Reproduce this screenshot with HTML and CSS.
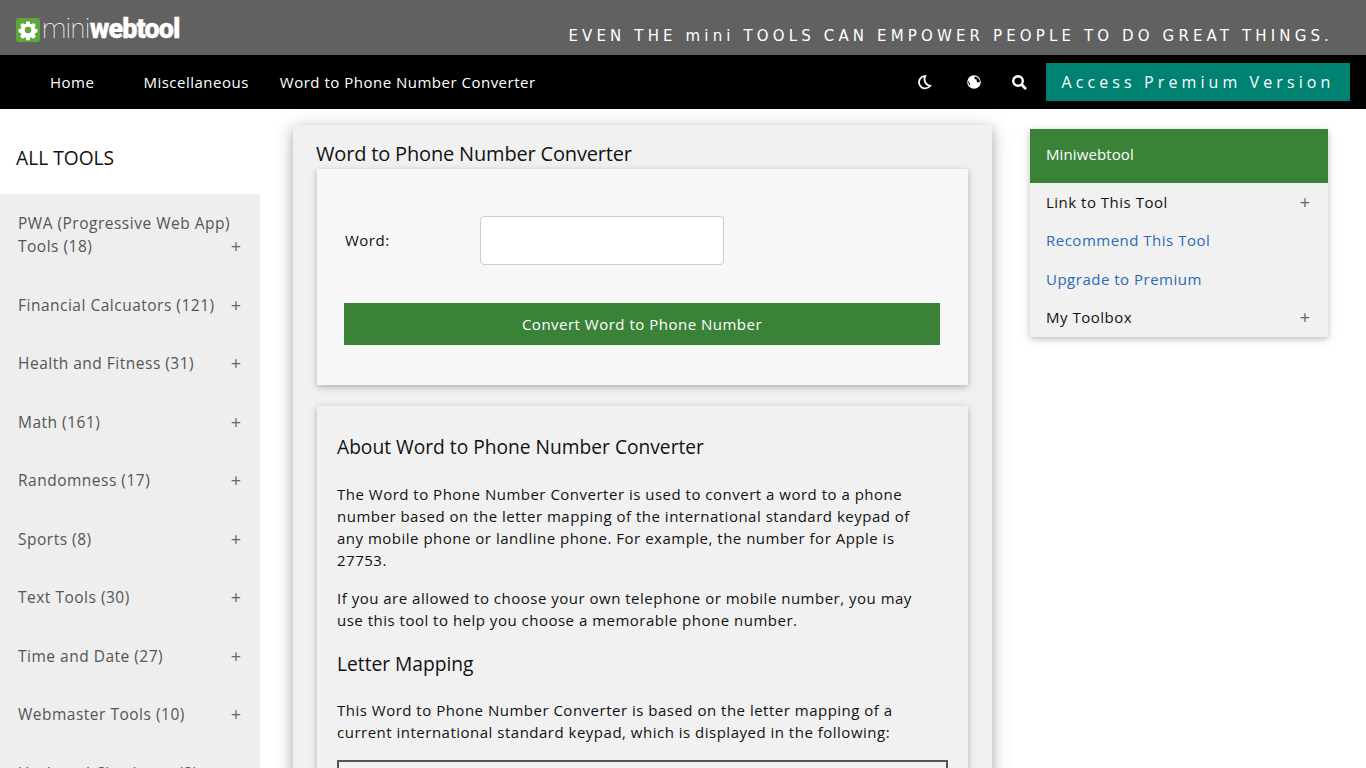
FILE: index.html
```html
<!DOCTYPE html>
<html lang="en">
<head>
<meta charset="utf-8">
<title>Word to Phone Number Converter</title>
<link rel="stylesheet" href="styles.css">
</head>
<body>
<header class="topbar">
  <a class="logo">
    <svg class="logo-icon" viewBox="0 0 24 24" width="24" height="24">
      <rect width="24" height="24" rx="3" fill="#5fa63a"/>
      <path fill="#fff" fill-rule="evenodd" d="M10.300 4h3.400l.4 2.200 1.500.6 1.900-1.300 2.400 2.400-1.300 1.900.6 1.500 2.200.4v3.400l-2.200.4-.6 1.500 1.300 1.900-2.400 2.400-1.900-1.300-1.500.6-.4 2.200h-3.400l-.4-2.200-1.500-.6-1.900 1.300-2.400-2.400 1.300-1.900-.6-1.500-2.200-.4v-3.400l2.200-.4.6-1.500-1.300-1.900 2.400-2.400 1.900 1.300 1.500-.6zM12 9.200a3.300 3.300 0 1 0 0 6.600 3.300 3.300 0 0 0 0-6.600z" transform="translate(0 -.5)"/>
    </svg>
    <span class="logo-thin">mini</span><span class="logo-bold">webtool</span>
  </a>
  <div class="slogan">EVEN THE mini TOOLS CAN EMPOWER PEOPLE TO DO GREAT THINGS.</div>
</header>
<nav class="navbar">
  <a class="nav-home">Home</a>
  <a class="nav-misc">Miscellaneous</a>
  <a class="nav-tool">Word to Phone Number Converter</a>
  <div class="nav-right">
    <svg class="nav-icon moon" viewBox="0 0 16 16" width="16" height="16"><path fill="none" stroke="#fff" stroke-width="1.700" d="M9.300 2a6.200 6.200 0 1 0 5 9.800A6.600 6.600 0 0 1 9.300 2z"/></svg>
    <svg class="nav-icon globe" viewBox="0 0 16 16" width="16" height="16"><path fill="#fff" fill-rule="evenodd" d="M8 1.200a6.800 6.800 0 1 1 0 13.600A6.800 6.800 0 0 1 8 1.200zM9.300 2.500c-.9.600-1.200 1.500-.6 2.300.6.700 1.600.5 1.900 1.300.2.800-.1 1.500.5 2 .7.400 1.800.2 2.800-.2-.3-2.500-2.100-4.600-4.600-5.400zM2.400 6.500c-.4 1.900.2 3.900 1.700 5.200.1-1.100-.1-2-.5-2.700-.4-.9-.6-1.800-1.200-2.500z"/></svg>
    <svg class="nav-icon search" viewBox="0 0 16 16" width="16" height="16"><circle cx="7" cy="7" r="4.800" fill="none" stroke="#fff" stroke-width="2.400"/><path stroke="#fff" stroke-width="2.800" stroke-linecap="round" d="M10.800 10.800l3.400 3.400"/></svg>
    <a class="premium">Access Premium Version</a>
  </div>
</nav>
<div class="layout">
  <aside class="sidebar">
    <h2 class="all-tools">ALL TOOLS</h2>
    <ul class="tool-list">
      <li class="tall"><span>PWA (Progressive Web App) Tools (18)</span><i>+</i></li>
      <li><span>Financial Calcuators (121)</span><i>+</i></li>
      <li><span>Health and Fitness (31)</span><i>+</i></li>
      <li><span>Math (161)</span><i>+</i></li>
      <li><span>Randomness (17)</span><i>+</i></li>
      <li><span>Sports (8)</span><i>+</i></li>
      <li><span>Text Tools (30)</span><i>+</i></li>
      <li><span>Time and Date (27)</span><i>+</i></li>
      <li><span>Webmaster Tools (10)</span><i>+</i></li>
      <li><span>Hash and Checksum (8)</span><i>+</i></li>
    </ul>
  </aside>
  <main class="main-card">
    <h1 class="page-title">Word to Phone Number Converter</h1>
    <form class="form-card">
      <div class="field">
        <label class="field-label">Word:</label>
        <input class="field-input" type="text">
      </div>
      <button class="submit" type="button">Convert Word to Phone Number</button>
    </form>
    <section class="about-card">
      <h2 class="about-title">About Word to Phone Number Converter</h2>
      <p>The Word to Phone Number Converter is used to convert a word to a phone number based on the letter mapping of the international standard keypad of any mobile phone or landline phone. For example, the number for Apple is 27753.</p>
      <p>If you are allowed to choose your own telephone or mobile number, you may use this tool to help you choose a memorable phone number.</p>
      <h3 class="about-sub">Letter Mapping</h3>
      <p>This Word to Phone Number Converter is based on the letter mapping of a current international standard keypad, which is displayed in the following:</p>
      <div class="keypad"></div>
    </section>
  </main>
  <aside class="right-panel">
    <div class="panel-head">Miniwebtool</div>
    <div class="panel-row"><span>Link to This Tool</span><i>+</i></div>
    <div class="panel-row link"><span>Recommend This Tool</span></div>
    <div class="panel-row link"><span>Upgrade to Premium</span></div>
    <div class="panel-row"><span>My Toolbox</span><i>+</i></div>
  </aside>
</div>
</body>
</html>
```
FILE: styles.css
```css
* { box-sizing: border-box; }
html, body { margin: 0; height: 768px; overflow: hidden; }
body { font-family: "Open Sans", "Noto Sans", sans-serif; font-size: 15px; letter-spacing: .5px; color: #111; background: #fff; }
.topbar { height: 55px; background: #616161; display: flex; justify-content: space-between; padding: 0 33px 0 16px; }
.logo { display: flex; align-items: center; color: #fff; padding-top: 4px; height: 55px; }
.logo-icon { margin-right: 2px; }
.logo-thin { font-family: Roboto, sans-serif; font-weight: 100; font-size: 27px; letter-spacing: -0.6px; margin-top: -1px; }
.logo-bold { font-family: Roboto, sans-serif; font-weight: 900; font-size: 27px; letter-spacing: -.9px; margin-top: -1px; -webkit-text-stroke: .3px #fff; }
.slogan { align-self: flex-end; padding-bottom: 10px; font-family: "DejaVu Sans", sans-serif; font-size: 15px; letter-spacing: 4.140px; color: #fff; }
.navbar { height: 54px; background: #000; color: #fff; display: flex; align-items: center; padding: 0 16px 0 50px; }
.nav-misc { margin-left: 49px; }
.nav-tool { margin-left: 31px; }
.nav-right { margin-left: auto; display: flex; align-items: center; }
.nav-icon { margin-right: 33px; }
.globe { margin-right: 29px; }
.search { margin-right: 19px; }
.moon { margin-left: -1px; margin-right: 34px; }
.premium { width: 304px; height: 38px; background: #008272; display: flex; align-items: center; justify-content: center; font-size: 16px; letter-spacing: 4.100px; }
.layout { display: flex; align-items: flex-start; }
.sidebar { width: 260px; flex: none; }
.all-tools { margin: 0; height: 85px; padding: 37px 0 0 16px; font-size: 19.200px; font-weight: 400; line-height: 24px; letter-spacing: 0; }
.tool-list { list-style: none; margin: 0; padding: 0 0 100px; background: #eee; color: #555; font-size: 15.500px; }
.tool-list li { display: flex; justify-content: space-between; align-items: flex-end; padding: 17.750px 19px 17.750px 18px; line-height: 23px; height: 58.500px; }
.tool-list li.tall { height: 81.750px; }
.tool-list li.tall span { max-width: 220px; }
.tool-list i, .panel-row i { font-style: normal; color: #666; font-size: 18px; letter-spacing: 0; }
.main-card { width: 699px; margin: 16px 0 0 33px; padding: 14px 24px 0; background: #f1f1f1; box-shadow: 0 4px 10px rgba(0,0,0,.2), 0 4px 20px rgba(0,0,0,.19); flex: none; height: 800px; }
.page-title { margin: 0 0 0 -1px; font-size: 20px; font-weight: 400; line-height: 30px; letter-spacing: -.17px; }
.form-card { background: #f7f7f7; height: 216px; padding: 47px 27px 0; box-shadow: 0 2px 5px rgba(0,0,0,.16), 0 2px 10px rgba(0,0,0,.12); }
.field { display: flex; align-items: center; height: 49px; }
.field-label { width: 136px; padding: 0 0 2px 1px; }
.field-input { width: 244px; height: 49px; border: 1px solid #ccc; border-radius: 4px; background: #fff; }
.submit { display: block; width: 596px; height: 42px; margin-top: 38px; padding: 0; border: 0; background: #3a8238; color: #fff; font: inherit; letter-spacing: .5px; }
.about-card { margin-top: 21px; padding: 27px 20px; height: 600px; background: #f1f1f1; box-shadow: 0 2px 5px rgba(0,0,0,.16), 0 2px 10px rgba(0,0,0,.12); line-height: 22px; }
.about-card p { margin: 0 0 16px; max-width: 600px; }
.about-title { margin: 0 0 22px; font-size: 19.200px; font-weight: 400; line-height: 28px; letter-spacing: 0; }
.about-sub { margin: 19px 0 21px; font-size: 19.200px; font-weight: 400; line-height: 28px; letter-spacing: 0; }
.keypad { height: 120px; margin-top: 17px; border: 2px solid #555; }
.right-panel { width: 298px; flex: none; margin: 20px 0 0 38px; background: #f1f1f1; box-shadow: 0 2px 5px rgba(0,0,0,.16), 0 2px 10px rgba(0,0,0,.12); }
.panel-head { height: 54px; padding: 0 16px 4px; background: #3a8238; color: #fff; display: flex; align-items: center; letter-spacing: .1px; }
.panel-row { display: flex; justify-content: space-between; align-items: center; height: 38.500px; padding: 0 18px 1px 16px; }
.panel-row.link { color: #2a6ab8; }
```
